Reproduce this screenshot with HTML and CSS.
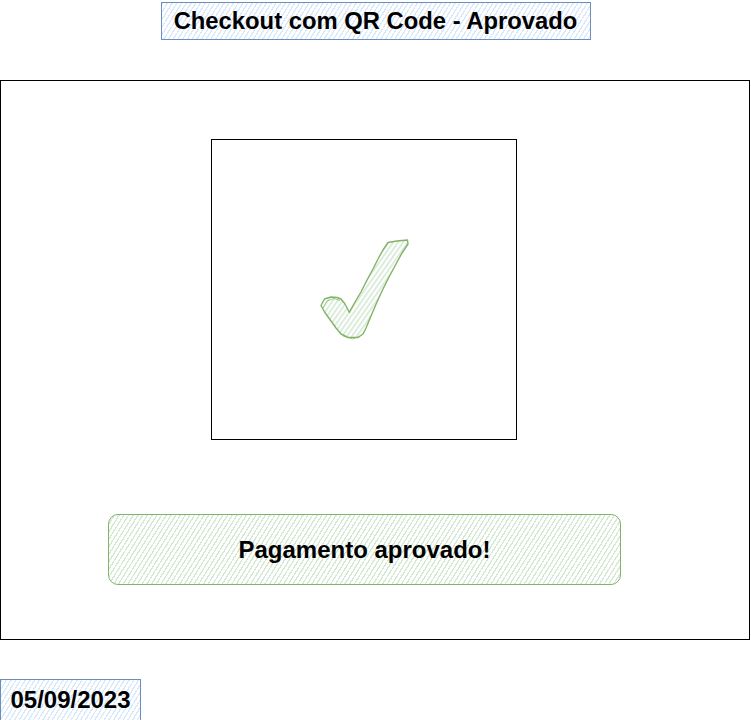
FILE: index.html
```html
<!DOCTYPE html>
<html lang="pt">
<head>
<meta charset="utf-8">
<title>Checkout com QR Code - Aprovado</title>
<link rel="stylesheet" href="styles.css">
</head>
<body>
  <header class="title-row">
    <div class="title">Checkout com QR Code - Aprovado</div>
  </header>
  <main class="frame">
    <div class="qr-box">
      <svg class="check" width="94" height="107" viewBox="316 238 94 107" xmlns="http://www.w3.org/2000/svg">
        <defs>
          <pattern id="hatch" width="4" height="4" patternUnits="userSpaceOnUse" patternTransform="rotate(35)">
            <rect width="4" height="4" fill="#ffffff"/>
            <rect width="1.6" height="4" fill="#d5e8d4"/>
          </pattern>
        </defs>
        <path d="M406.5 241 L407 245 L401 254 L395 265 L388 278 L382 290 L376 303 L370 317 L365 329 L362 335 L357 338.5 L347 338.5 L340 335 L335 329 L330 322 L323.5 313 L320 306.5 L323.5 300 L330 298 L336 298.5 L340 300 L344 305 L348.3 313.3 L354 303 L360 293 L366 281 L372 270 L377 260 L382 251 L387 243.5 L396 242 Z" fill="url(#hatch)" stroke="#82b366" stroke-width="1.4" stroke-linejoin="round"/>
        <path d="M322 309 L326 302 L333 299.5 L339 301.5" fill="none" stroke="#82b366" stroke-width="1" opacity="0.7"/>
        <path d="M342 337 L352 340 L359 337" fill="none" stroke="#82b366" stroke-width="1" opacity="0.6"/>
      </svg>
    </div>
    <div class="approved">Pagamento aprovado!</div>
  </main>
  <footer class="date">05/09/2023</footer>
</body>
</html>
```
FILE: styles.css
```css
html, body {
  margin: 0;
  padding: 0;
  background: #ffffff;
}

body {
  width: 751px;
  font-family: "Liberation Sans", Arial, sans-serif;
  color: #000000;
}

.title-row {
  display: flex;
  justify-content: center;
  padding-top: 2px;
  height: 38px;
}

.title {
  box-sizing: border-box;
  width: 430px;
  height: 38px;
  border: 1px solid #6c8ebf;
  background: repeating-linear-gradient(122deg, #dae8fc 0 1.3px, #ffffff 1.3px 4px);
  display: flex;
  align-items: center;
  justify-content: center;
  font-weight: bold;
  font-size: 23.8px;
}

.frame {
  box-sizing: border-box;
  margin-top: 40px;
  width: 750px;
  height: 560px;
  border: 1px solid #000000;
  padding-top: 58px;
  display: flex;
  flex-direction: column;
}

.qr-box {
  box-sizing: border-box;
  margin-left: 210px;
  width: 306px;
  height: 301px;
  border: 1px solid #000000;
  display: flex;
  align-items: center;
  justify-content: center;
}

.check {
  display: block;
  margin-top: 2px;
}

.approved {
  box-sizing: border-box;
  margin-top: 74px;
  margin-left: 107px;
  width: 513px;
  height: 71px;
  border: 1.5px solid #82b366;
  border-radius: 10px;
  background: repeating-linear-gradient(122deg, #d5e8d4 0 1.3px, #ffffff 1.3px 4px);
  display: flex;
  align-items: center;
  justify-content: center;
  font-weight: bold;
  font-size: 24px;
}

.date {
  box-sizing: border-box;
  margin-top: 39px;
  width: 141px;
  height: 42px;
  border: 1px solid #6c8ebf;
  background: repeating-linear-gradient(122deg, #dae8fc 0 1.3px, #ffffff 1.3px 4px);
  display: flex;
  align-items: center;
  justify-content: center;
  font-weight: bold;
  font-size: 24px;
}
```
